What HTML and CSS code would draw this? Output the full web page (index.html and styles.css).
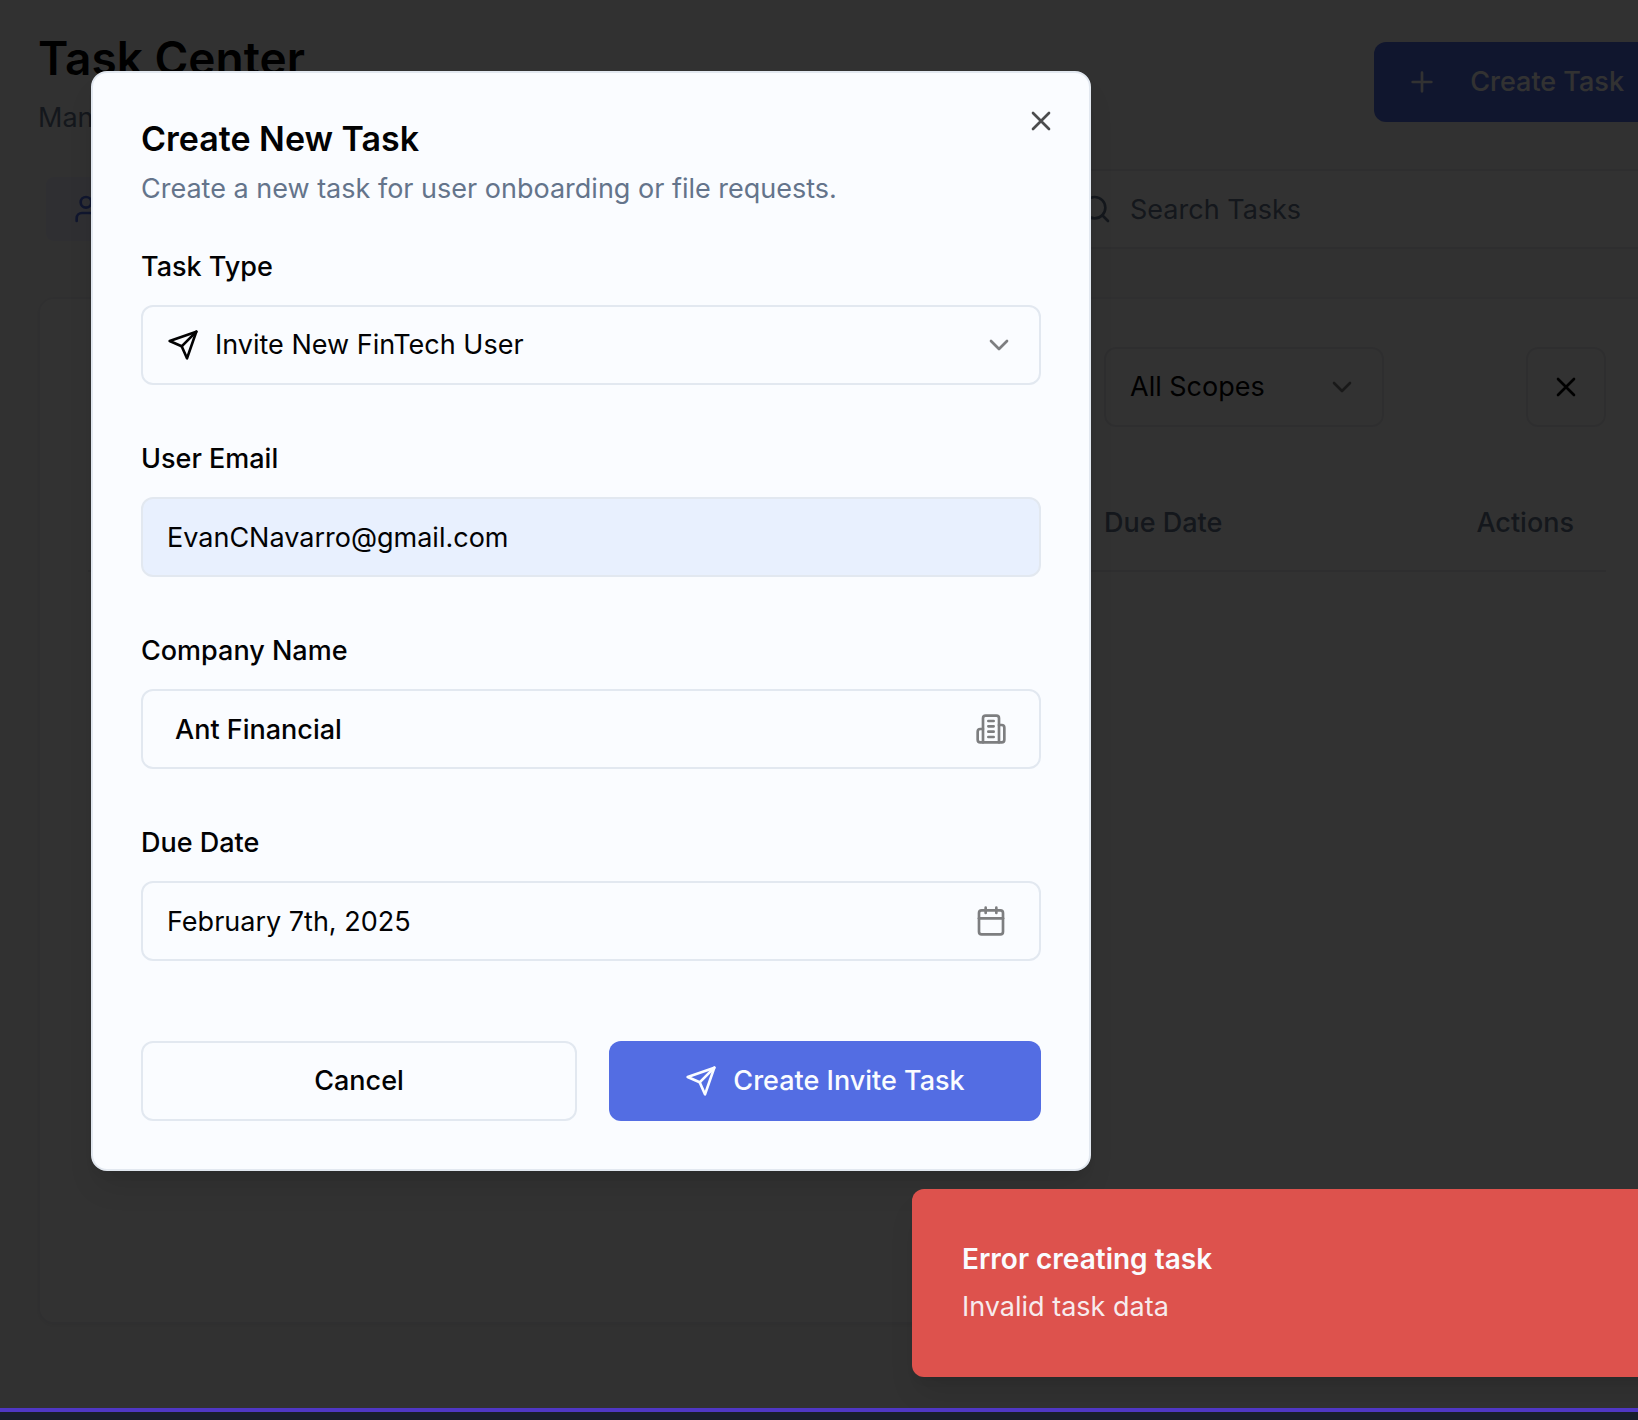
FILE: index.html
```html
<!DOCTYPE html>
<html lang="en">
<head>
<meta charset="utf-8">
<title>Task Center</title>
<link rel="stylesheet" href="styles.css">
</head>
<body>
<div class="app">
  <main class="page">
    <header class="page-header">
      <div class="page-heading">
        <h1 class="page-title">Task Center</h1>
        <p class="muted">Manage</p>
      </div>
      <button class="btn btn-primary btn-new" type="button">
        <svg class="icon" viewBox="0 0 24 24"><path d="M5 12h14M12 5v14"/></svg>
        Create Task
      </button>
    </header>

    <div class="toolbar">
      <div class="tabs">
        <button class="tab" type="button" aria-label="My tasks">
          <svg class="icon" viewBox="0 0 24 24"><path d="M19 21v-2a4 4 0 0 0-4-4H9a4 4 0 0 0-4 4v2"/><circle cx="12" cy="7" r="4"/></svg>
        </button>
      </div>
      <div class="control search">
        <input class="field" type="search" placeholder="Search Tasks" aria-label="Search Tasks">
        <svg class="icon icon-start muted" viewBox="0 0 24 24"><circle cx="11" cy="11" r="8"/><path d="m21 21-4.300-4.300"/></svg>
      </div>
    </div>

    <section class="card">
      <div class="filters">
        <div class="control scope">
          <select class="field" aria-label="Scope"><option>All Scopes</option></select>
          <svg class="icon icon-end faded" viewBox="0 0 24 24"><path d="m6 9 6 6 6-6"/></svg>
        </div>
        <button class="btn btn-outline btn-square" type="button" aria-label="Clear filters">
          <svg class="icon" viewBox="0 0 24 24"><path d="M18 6 6 18M6 6l12 12"/></svg>
        </button>
      </div>
      <table class="tasks">
        <thead><tr><th class="col-rest"></th><th class="col-due">Due Date</th><th class="col-actions">Actions</th></tr></thead>
      </table>
    </section>
  </main>

  <div class="overlay"></div>

  <section class="dialog" role="dialog" aria-modal="true" aria-labelledby="dialog-title">
    <button class="dialog-close" type="button" aria-label="Close">
      <svg class="icon" viewBox="0 0 24 24"><path d="M18 6 6 18M6 6l12 12"/></svg>
    </button>
    <header class="dialog-header">
      <h2 class="dialog-title" id="dialog-title">Create New Task</h2>
      <p class="muted">Create a new task for user onboarding or file requests.</p>
    </header>
    <form class="form">
      <div class="form-item">
        <label for="task-type">Task Type</label>
        <div class="control">
          <select class="field field-icon" id="task-type"><option>Invite New FinTech User</option></select>
          <svg class="icon icon-start" viewBox="0 0 24 24"><path d="m22 2-7 20-4-9-9-4Z"/><path d="M22 2 11 13"/></svg>
          <svg class="icon icon-end faded" viewBox="0 0 24 24"><path d="m6 9 6 6 6-6"/></svg>
        </div>
      </div>
      <div class="form-item">
        <label for="email">User Email</label>
        <div class="control">
          <input class="field field-filled" id="email" type="email" value="EvanCNavarro@gmail.com">
        </div>
      </div>
      <div class="form-item">
        <label for="company">Company Name</label>
        <div class="control">
          <input class="field field-company" id="company" type="text" value="Ant Financial">
          <svg class="icon icon-end icon-inset faded" viewBox="0 0 24 24"><path d="M6 22V4a2 2 0 0 1 2-2h8a2 2 0 0 1 2 2v18Z"/><path d="M6 12H4a2 2 0 0 0-2 2v6a2 2 0 0 0 2 2h2"/><path d="M18 9h2a2 2 0 0 1 2 2v9a2 2 0 0 1-2 2h-2"/><path d="M10 6h4M10 10h4M10 14h4M10 18h4"/></svg>
        </div>
      </div>
      <div class="form-item">
        <label for="due">Due Date</label>
        <div class="control">
          <input class="field" id="due" type="text" value="February 7th, 2025">
          <svg class="icon icon-end icon-inset faded" viewBox="0 0 24 24"><path d="M8 2v4M16 2v4"/><rect width="18" height="18" x="3" y="4" rx="2"/><path d="M3 10h18"/></svg>
        </div>
      </div>
      <div class="form-actions">
        <button class="btn btn-outline" type="button">Cancel</button>
        <button class="btn btn-primary" type="submit">
          <svg class="icon" viewBox="0 0 24 24"><path d="m22 2-7 20-4-9-9-4Z"/><path d="M22 2 11 13"/></svg>
          Create Invite Task
        </button>
      </div>
    </form>
  </section>

  <div class="toast" role="alert">
    <p class="toast-title">Error creating task</p>
    <p class="toast-text">Invalid task data</p>
  </div>
</div>
<footer class="dock"></footer>
</body>
</html>
```
FILE: styles.css
```css
:root {
  --primary: #536de3;
  --border: #e2e8f0;
  --surface: #fafcff;
  --muted: #64748b;
}

* { box-sizing: border-box; }

body {
  margin: 0;
  min-height: 100vh;
  display: flex;
  flex-direction: column;
  overflow: hidden;
  background: #f5f5f5;
  color: #020203;
  font: 400 27px/40px Inter, "Liberation Sans", sans-serif;
}

h1, h2, p { margin: 0; }

button, input, select { font: inherit; color: inherit; }

.icon {
  width: 32px;
  height: 32px;
  flex: none;
  fill: none;
  stroke: currentColor;
  stroke-width: 2;
  stroke-linecap: round;
  stroke-linejoin: round;
}

.muted { color: var(--muted); }
.faded { opacity: 0.5; }

.app {
  position: relative;
  flex: 1;
  display: flex;
  overflow: hidden;
}

/* The page runs slightly past the right edge of the window */
.page {
  --surface: #fafafa;
  --border: #e6e6ea;
  flex: 1;
  display: flex;
  flex-direction: column;
  margin-right: -18px;
  padding: 26px 0 84px 38px;
}

.page-header {
  display: flex;
  justify-content: space-between;
  align-items: center;
  margin-bottom: 31px;
}

.page-heading {
  display: flex;
  flex-direction: column;
  gap: 8px;
}

.page-title {
  font-size: 46px;
  line-height: 64px;
  font-weight: 600;
}

.btn {
  display: flex;
  justify-content: center;
  align-items: center;
  gap: 16px;
  height: 80px;
  padding: 0 32px;
  border: 0;
  border-radius: 12px;
  font-weight: 500;
}

.btn-primary { background: var(--primary); color: var(--surface); }
.btn-outline { background: var(--surface); border: 2px solid var(--border); }
.btn-square { width: 80px; padding: 0; }
.btn-new { gap: 32px; }

.toolbar {
  display: flex;
  justify-content: space-between;
  margin-bottom: 48px;
}

.tabs {
  display: flex;
  width: 480px;
  height: 80px;
  padding: 6px;
  border: 2px solid #f2f2f2;
  border-radius: 12px;
  background: #f5f5f5;
}

.tab {
  display: flex;
  align-items: center;
  width: 220px;
  padding: 0 24px;
  border: 0;
  border-radius: 8px;
  background: #e9eafa;
  color: var(--primary);
}

.control { display: grid; align-items: center; }
.control > * { grid-area: 1 / 1; }
.control > .icon { pointer-events: none; }

.field {
  appearance: none;
  width: 100%;
  height: 80px;
  padding: 0 24px;
  border: 2px solid var(--border);
  border-radius: 12px;
  background: var(--surface);
  outline: 0;
}

.field::placeholder { color: var(--muted); opacity: 1; }
.field-icon { padding-left: 72px; }
.field-filled { background: #e8f0fe; }
.field-company { padding-left: 32px; font-weight: 500; }

.icon-start { margin-left: 26px; }
.icon-end { justify-self: end; margin-right: 26px; }
.icon-inset { margin-right: 34px; }

.search { width: 602px; }
.search .field { padding-left: 74px; }

.card {
  flex: 1;
  padding: 48px;
  border: 2px solid #ececee;
  border-radius: 16px;
  background: var(--surface);
  box-shadow: 0 2px 4px rgba(0, 0, 0, 0.05);
}

.filters {
  display: flex;
  justify-content: flex-end;
  gap: 142px;
  margin-bottom: 48px;
}

.scope { width: 280px; }

.tasks {
  width: 100%;
  table-layout: fixed;
  border-collapse: collapse;
}

.tasks th {
  height: 96px;
  padding: 0 32px;
  border-bottom: 2px solid var(--border);
  color: var(--muted);
  font-weight: 500;
  text-align: left;
}

.tasks .col-due { width: 290px; }
.tasks .col-actions { width: 244px; text-align: right; }

.overlay {
  position: absolute;
  inset: 0;
  background: rgba(0, 0, 0, 0.8);
}

.dialog {
  position: absolute;
  top: 71px;
  left: 91px;
  width: 1000px;
  padding: 48px;
  border: 2px solid var(--border);
  border-radius: 16px;
  background: var(--surface);
  box-shadow: 0 20px 30px -6px rgba(0, 0, 0, 0.1), 0 8px 12px -8px rgba(0, 0, 0, 0.1);
}

.dialog-close {
  position: absolute;
  top: 32px;
  right: 32px;
  display: flex;
  padding: 0;
  border: 0;
  background: none;
  opacity: 0.7;
}

.dialog-header {
  display: flex;
  flex-direction: column;
  gap: 12px;
  margin-bottom: 44px;
}

.dialog-title {
  font-size: 34px;
  line-height: 36px;
  font-weight: 600;
}

.form {
  display: flex;
  flex-direction: column;
  gap: 60px;
}

.form-item {
  display: flex;
  flex-direction: column;
  gap: 24px;
}

.form-item label {
  line-height: 28px;
  font-weight: 500;
}

.form-actions {
  display: flex;
  gap: 32px;
  margin-top: 20px;
}

.form-actions .btn { flex: 1 1 0; }

.toast {
  position: absolute;
  right: -114px;
  bottom: 31px;
  display: flex;
  flex-direction: column;
  gap: 8px;
  width: 840px;
  padding: 50px;
  border-radius: 12px;
  background: #dd524d;
  color: var(--surface);
  box-shadow: 0 20px 30px -6px rgba(0, 0, 0, 0.1), 0 8px 12px -8px rgba(0, 0, 0, 0.1);
}

.toast-title { font-size: 28px; font-weight: 600; }
.toast-text { opacity: 0.9; }

.dock {
  height: 12px;
  border-top: 4px solid #4f37c4;
  background: #181e2b;
}
```
